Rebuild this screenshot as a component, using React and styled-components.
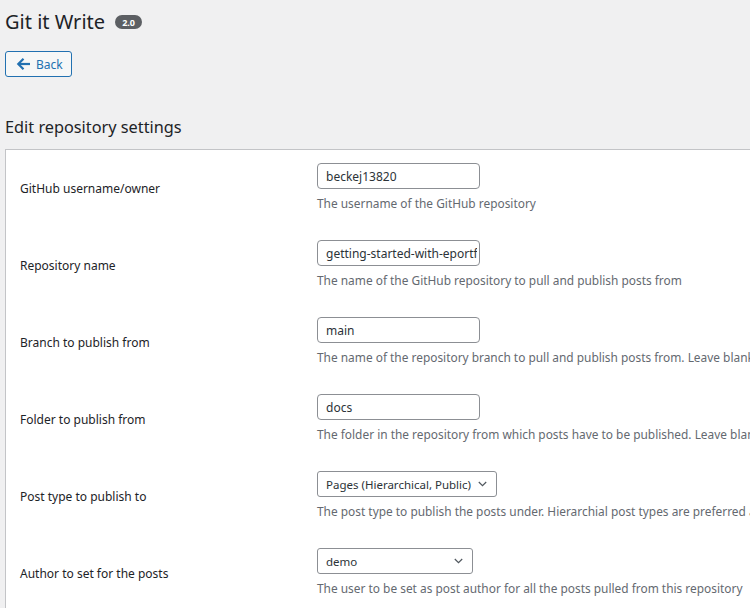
import React from "react";
import styled, { createGlobalStyle } from "styled-components";

const GlobalStyle = createGlobalStyle`
  html, body { margin: 0; padding: 0; background: #f0f0f1; }
  body { font-family: "Noto Sans", "Open Sans", sans-serif; color: #1d2327; }
  #root { min-height: 608px; }
`;

const Page = styled.div`
  width: 750px;
  height: 608px;
  overflow: hidden;
  padding-left: 5px;
  box-sizing: border-box;
`;

const Header = styled.div`
  display: flex;
  align-items: center;
  gap: 10px;
  padding-top: 9px;
`;

const Title = styled.h1`
  margin: 0;
  font-size: 20px;
  line-height: 26px;
  font-weight: 400;
  color: #1d2327;
`;

const Badge = styled.span`
  display: inline-flex;
  align-items: center;
  justify-content: center;
  height: 14px;
  min-width: 27px;
  box-sizing: border-box;
  padding: 0 6px;
  border-radius: 7px;
  background: #5c5f63;
  color: #fff;
  font-size: 9px;
  font-weight: 700;
  line-height: 1;
`;

const BackButton = styled.button`
  display: inline-flex;
  align-items: center;
  gap: 5px;
  margin-top: 16px;
  height: 26px;
  padding: 0 8px 0 10px;
  border: 1px solid #2271b1;
  border-radius: 3px;
  background: #f6f7f7;
  color: #2271b1;
  font-family: "Noto Sans", sans-serif;
  font-size: 12px;
  cursor: pointer;
  box-sizing: border-box;
`;

const SectionTitle = styled.h2`
  margin: 39px 0 10px;
  font-size: 16.3px;
  line-height: 23px;
  font-weight: 400;
  color: #1d2327;
`;

const Panel = styled.div`
  width: 1100px;
  background: #fff;
  border: 1px solid #c3c4c7;
  padding-left: 14px;
  box-sizing: border-box;
`;

const Row = styled.div`
  display: grid;
  grid-template-columns: 297px 1fr;
  height: 77px;
`;

const Label = styled.div`
  align-self: center;
  font-size: 12px;
  line-height: 18px;
  color: #1d2327;
`;

const Field = styled.div`
  padding-top: 13px;
  display: flex;
  flex-direction: column;
  align-items: flex-start;
`;

const TextInput = styled.input`
  width: 163px;
  height: 26px;
  box-sizing: border-box;
  padding: 0 2px 0 8px;
  border: 1px solid #8c8f94;
  border-radius: 4px;
  background: #fff;
  color: #2c3338;
  font-family: "Noto Sans", sans-serif;
  font-size: 12px;
  outline: none;
`;

const SelectBox = styled.div`
  display: flex;
  align-items: center;
  justify-content: space-between;
  width: ${(p) => p.$width}px;
  height: 26px;
  box-sizing: border-box;
  padding: 0 9px 0 8px;
  border: 1px solid #8c8f94;
  border-radius: 3px;
  background: #fff;
  color: #2c3338;
  font-size: 11.5px;
  white-space: nowrap;
`;

const Description = styled.p`
  margin: 5px 0 0;
  font-size: 11.9px;
  line-height: 18px;
  color: #646970;
  white-space: nowrap;
`;

const ArrowLeft = () => (
  <svg width="15" height="14" viewBox="0 0 15 14" fill="none">
    <path d="M14 7H2.5" stroke="#2271b1" strokeWidth="2.2" />
    <path d="M7.5 1.8L2.3 7l5.2 5.2" stroke="#2271b1" strokeWidth="2.2" strokeLinejoin="miter" />
  </svg>
);

const Chevron = () => (
  <svg width="9" height="6" viewBox="0 0 9 6" fill="none">
    <path d="M0.8 1l3.7 3.7L8.2 1" stroke="#50575e" strokeWidth="1.2" />
  </svg>
);

const rows = [
  {
    label: "GitHub username/owner",
    type: "input",
    value: "beckej13820",
    desc: "The username of the GitHub repository",
  },
  {
    label: "Repository name",
    type: "input",
    value: "getting-started-with-eportfolio",
    desc: "The name of the GitHub repository to pull and publish posts from",
  },
  {
    label: "Branch to publish from",
    type: "input",
    value: "main",
    desc: "The name of the repository branch to pull and publish posts from. Leave blank to use the default branch.",
  },
  {
    label: "Folder to publish from",
    type: "input",
    value: "docs",
    desc: "The folder in the repository from which posts have to be published. Leave blank to publish from the root of the repository.",
  },
  {
    label: "Post type to publish to",
    type: "select",
    value: "Pages (Hierarchical, Public)",
    width: 180,
    desc: "The post type to publish the posts under. Hierarchial post types are preferred as they support nested folders.",
  },
  {
    label: "Author to set for the posts",
    type: "select",
    value: "demo",
    width: 156,
    desc: "The user to be set as post author for all the posts pulled from this repository",
  },
];

export default function App() {
  return (
    <Page>
      <GlobalStyle />
      <Header>
        <Title>Git it Write</Title>
        <Badge>2.0</Badge>
      </Header>
      <BackButton>
        <ArrowLeft />
        Back
      </BackButton>
      <SectionTitle>Edit repository settings</SectionTitle>
      <Panel>
        {rows.map((r) => (
          <Row key={r.label}>
            <Label>{r.label}</Label>
            <Field>
              {r.type === "input" ? (
                <TextInput readOnly value={r.value} />
              ) : (
                <SelectBox $width={r.width}>
                  <span>{r.value}</span>
                  <Chevron />
                </SelectBox>
              )}
              <Description>{r.desc}</Description>
            </Field>
          </Row>
        ))}
      </Panel>
    </Page>
  );
}
